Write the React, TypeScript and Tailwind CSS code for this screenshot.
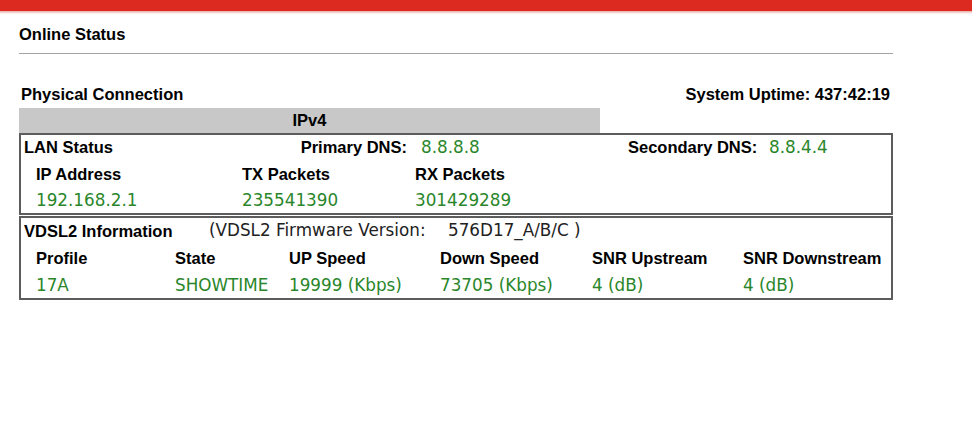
const val = "font-['DejaVu_Sans',Verdana,sans-serif] font-normal text-[16.8px] text-[#2a862a]";
const plain = "font-['DejaVu_Sans',Verdana,sans-serif] font-normal text-[16.8px] text-[#222]";

function Cell({ w, children, className = "" }: { w: string; children?: React.ReactNode; className?: string }) {
  return <div className={`${w} shrink-0 whitespace-nowrap ${className}`}>{children}</div>;
}

export default function App() {
  return (
    <div className="w-[972px] h-[425px] bg-white text-black font-['Liberation_Sans',Arial,sans-serif] text-[16.5px] font-bold overflow-hidden">
      <div className="h-[11px] bg-[#dc2a21]" />
      <div className="h-[3px] bg-gradient-to-b from-[#e9a9a2] to-white" />

      <div className="ml-[19px] w-[874px]">
        <div className="h-[39px] flex items-center pt-[2px]">Online Status</div>
        <div className="h-px bg-[#a3a3a3]" />

        <div className="mt-[27px] h-[27px] flex items-center justify-between pl-[2px] pr-[3px]">
          <span>Physical Connection</span>
          <span>System Uptime: 437:42:19</span>
        </div>

        <div className="h-[25px] w-[581px] bg-[#c8c8c8] flex items-center justify-center">IPv4</div>

        {/* LAN status */}
        <div className="border-2 border-[#5c5c5c]">
          <div className="h-[24px] flex items-center pl-[3px]">
            <Cell w="w-[386px]" className="flex justify-between pr-[3px]">
              <span>LAN Status</span>
              <span>Primary DNS:</span>
            </Cell>
            <Cell w="w-[11px]" />
            <Cell w="w-[207px]" className={`${val} pt-[2px]`}>8.8.8.8</Cell>
            <Cell w="w-[141px]">Secondary DNS:</Cell>
            <Cell w="w-[80px]" className={`${val} pt-[2px]`}>8.8.4.4</Cell>
          </div>
          <div className="h-[28px] flex items-center pl-[15px] pt-[2px]">
            <Cell w="w-[206px]">IP Address</Cell>
            <Cell w="w-[173px]">TX Packets</Cell>
            <Cell w="w-[150px]">RX Packets</Cell>
          </div>
          <div className="h-[26px] flex items-center pl-[15px] pt-[2px]">
            <Cell w="w-[206px]" className={val}>192.168.2.1</Cell>
            <Cell w="w-[173px]" className={val}>235541390</Cell>
            <Cell w="w-[150px]" className={val}>301429289</Cell>
          </div>
        </div>

        {/* VDSL2 */}
        <div className="mt-px border-2 border-[#5c5c5c]">
          <div className="h-[26px] flex items-center pl-[3px]">
            <Cell w="w-[185px]">VDSL2 Information</Cell>
            <Cell w="w-[239px]" className={plain}>
              (VDSL2 Firmware Version:
            </Cell>
            <Cell w="w-[200px]" className={plain}>
              576D17_A/B/C )
            </Cell>
          </div>
          <div className="h-[27px] flex items-center pl-[15px] pt-[2px]">
            <Cell w="w-[139px]">Profile</Cell>
            <Cell w="w-[114px]">State</Cell>
            <Cell w="w-[151px]">UP Speed</Cell>
            <Cell w="w-[152px]">Down Speed</Cell>
            <Cell w="w-[151px]">SNR Upstream</Cell>
            <Cell w="w-[140px]">SNR Downstream</Cell>
          </div>
          <div className="h-[27px] flex items-center pl-[15px] pt-[3px]">
            <Cell w="w-[139px]" className={val}>17A</Cell>
            <Cell w="w-[114px]" className={val}>SHOWTIME</Cell>
            <Cell w="w-[151px]" className={val}>19999 (Kbps)</Cell>
            <Cell w="w-[152px]" className={val}>73705 (Kbps)</Cell>
            <Cell w="w-[151px]" className={val}>4 (dB)</Cell>
            <Cell w="w-[140px]" className={val}>4 (dB)</Cell>
          </div>
        </div>
      </div>
    </div>
  );
}
